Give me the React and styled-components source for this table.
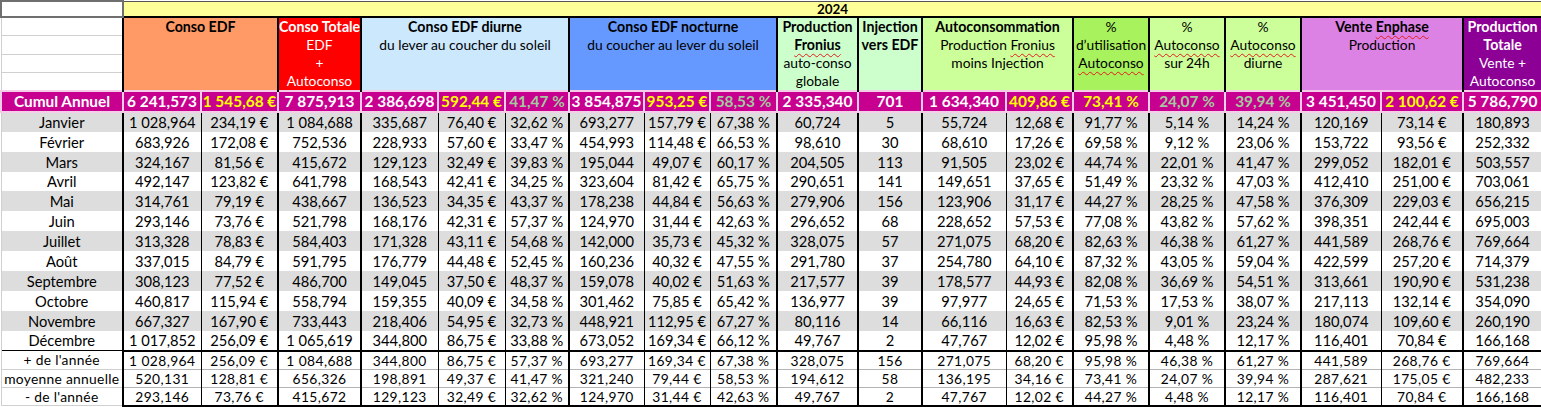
import React from 'react';
import styled, { createGlobalStyle } from 'styled-components';

const GlobalStyle = createGlobalStyle`
  body {
    margin: 0;
    background: #fff;
    font-family: Lato, 'Liberation Sans', sans-serif;
  }
`;

const Sheet = styled.table`
  border-collapse: collapse;
  table-layout: fixed;
  width: 1541px;
  color: #000;
  td {
    padding: 0;
    overflow: hidden;
    white-space: nowrap;
    text-align: center;
  }
`;

const Col = styled.col`
  width: ${props => props.$w}px;
`;

const Row = styled.tr`
  height: ${props => props.$h}px;
`;

const Corner = styled.td`
  border: 2px solid #6f6f6f;
`;

const YearCell = styled.td`
  background: #ffff99;
  border-top: 1px solid #555;
  border-bottom: 2px solid #000;
  border-right: 2px solid #000;
  font-weight: 700;
  font-size: 13.5px;
  line-height: 14px;
`;

const GridCell = styled.td`
  border-left: 1px solid #d0d0d0;
  border-bottom: 1px solid #d0d0d0;
`;

const HeadCell = styled.td`
  background: ${props => props.$bg};
  color: ${props => props.$fg || '#000'};
  border-left: 2px solid #000;
  border-right: 2px solid #000;
  vertical-align: top;
  font-size: 13.8px;
  line-height: 18.1px;
`;

const HeadLine = styled.div`
  font-weight: ${props => (props.$bold ? 700 : 400)};
  font-size: ${props => (props.$bold ? '14.2px' : '13.8px')};
  white-space: nowrap;
`;

const Wavy = styled.span`
  text-decoration: underline wavy #e21c1c;
  text-decoration-thickness: 1px;
  text-underline-offset: 3px;
`;

const tones = { white: '#ffffff', yellow: '#ffff00', sage: '#a3c99e' };

const CumulCell = styled.td`
  background: #c8008f;
  border: 2px solid #f4cde9;
  color: ${props => tones[props.$tone]};
  font-weight: 700;
  font-size: 15.4px;
  line-height: 17px;
`;

const Label = styled.td`
  background: ${props => (props.$shade ? '#dddddd' : '#ffffff')};
  border-left: 1px solid #d0d0d0;
  font-size: 14.7px;
`;

const DataCell = styled.td`
  background: ${props => (props.$shade ? '#dddddd' : '#ffffff')};
  border-left: ${props => (props.$thick ? '2px' : '1px')} solid #000;
  border-right: ${props => (props.$last ? '2px solid #000' : 'none')};
  font-size: 14.7px;
`;

const StatLabel = styled.td`
  border-left: 1px solid #d0d0d0;
  border-top: ${props => (props.$first ? '1px solid #000' : '1px solid #c8c8c8')};
  border-bottom: 1px solid #d0d0d0;
  font-size: 13.8px;
  letter-spacing: 0.3px;
`;

const StatCell = styled.td`
  border-left: ${props => (props.$thick ? '2px' : '1px')} solid #000;
  border-right: ${props => (props.$last ? '2px solid #000' : 'none')};
  border-top: ${props => (props.$first ? '2px solid #000' : '1px solid #b4b4b4')};
  border-bottom: ${props => (props.$end ? '2px solid #000' : 'none')};
  font-size: 13.8px;
  letter-spacing: 0.4px;
`;

const widths = [122, 78, 77, 83, 77, 67, 64, 75, 66, 67, 81, 64, 84, 67, 76, 76, 76, 80, 82, 79];
const thick = new Set([0, 2, 3, 6, 9, 10, 11, 13, 14, 15, 16, 18]);

const headers = [
  { span: 2, bg: '#ff9966', lines: ['*Conso EDF'] },
  { span: 1, bg: '#ff0000', fg: '#fff', lines: ['*Conso Totale', 'EDF', '+', 'Autoconso'] },
  { span: 3, bg: '#cce8fc', lines: ['*Conso EDF diurne', 'du lever au coucher du soleil'] },
  { span: 3, bg: '#6699ff', lines: ['*Conso EDF nocturne', 'du coucher au lever du soleil'] },
  { span: 1, bg: '#ccffcc', lines: ['*Production', '*~Fronius~', 'auto-conso', 'globale'] },
  { span: 1, bg: '#ccffcc', lines: ['*Injection', '*vers EDF'] },
  { span: 2, bg: '#ccff99', lines: ['*Autoconsommation', 'Production ~Fronius~', 'moins Injection'] },
  { span: 1, bg: '#a8f25e', lines: ['%', 'd’utilisation', '~Autoconso~'] },
  { span: 1, bg: '#ccff99', lines: ['%', '~Autoconso~', 'sur 24h'] },
  { span: 1, bg: '#ccff99', lines: ['%', '~Autoconso~', 'diurne'] },
  { span: 2, bg: '#dc82e4', lines: ['*Vente ~Enphase~', 'Production'] },
  { span: 1, bg: '#8c0096', fg: '#fff', lines: ['*Production', '*Totale', 'Vente +', '~Autoconso~'] },
];

const cumul = [
  '6 241,573', '1 545,68 €', '7 875,913', '2 386,698', '592,44 €', '41,47 %', '3 854,875',
  '953,25 €', '58,53 %', '2 335,340', '701', '1 634,340', '409,86 €', '73,41 %', '24,07 %',
  '39,94 %', '3 451,450', '2 100,62 €', '5 786,790',
];
const cumulTone = { 1: 'yellow', 4: 'yellow', 7: 'yellow', 12: 'yellow', 13: 'yellow', 17: 'yellow', 5: 'sage', 8: 'sage', 14: 'sage', 15: 'sage' };

const months = [
  ['Janvier', '1 028,964|234,19 €|1 084,688|335,687|76,40 €|32,62 %|693,277|157,79 €|67,38 %|60,724|5|55,724|12,68 €|91,77 %|5,14 %|14,24 %|120,169|73,14 €|180,893'],
  ['Février', '683,926|172,08 €|752,536|228,933|57,60 €|33,47 %|454,993|114,48 €|66,53 %|98,610|30|68,610|17,26 €|69,58 %|9,12 %|23,06 %|153,722|93,56 €|252,332'],
  ['Mars', '324,167|81,56 €|415,672|129,123|32,49 €|39,83 %|195,044|49,07 €|60,17 %|204,505|113|91,505|23,02 €|44,74 %|22,01 %|41,47 %|299,052|182,01 €|503,557'],
  ['Avril', '492,147|123,82 €|641,798|168,543|42,41 €|34,25 %|323,604|81,42 €|65,75 %|290,651|141|149,651|37,65 €|51,49 %|23,32 %|47,03 %|412,410|251,00 €|703,061'],
  ['Mai', '314,761|79,19 €|438,667|136,523|34,35 €|43,37 %|178,238|44,84 €|56,63 %|279,906|156|123,906|31,17 €|44,27 %|28,25 %|47,58 %|376,309|229,03 €|656,215'],
  ['Juin', '293,146|73,76 €|521,798|168,176|42,31 €|57,37 %|124,970|31,44 €|42,63 %|296,652|68|228,652|57,53 €|77,08 %|43,82 %|57,62 %|398,351|242,44 €|695,003'],
  ['Juillet', '313,328|78,83 €|584,403|171,328|43,11 €|54,68 %|142,000|35,73 €|45,32 %|328,075|57|271,075|68,20 €|82,63 %|46,38 %|61,27 %|441,589|268,76 €|769,664'],
  ['Août', '337,015|84,79 €|591,795|176,779|44,48 €|52,45 %|160,236|40,32 €|47,55 %|291,780|37|254,780|64,10 €|87,32 %|43,05 %|59,04 %|422,599|257,20 €|714,379'],
  ['Septembre', '308,123|77,52 €|486,700|149,045|37,50 €|48,37 %|159,078|40,02 €|51,63 %|217,577|39|178,577|44,93 €|82,08 %|36,69 %|54,51 %|313,661|190,90 €|531,238'],
  ['Octobre', '460,817|115,94 €|558,794|159,355|40,09 €|34,58 %|301,462|75,85 €|65,42 %|136,977|39|97,977|24,65 €|71,53 %|17,53 %|38,07 %|217,113|132,14 €|354,090'],
  ['Novembre', '667,327|167,90 €|733,443|218,406|54,95 €|32,73 %|448,921|112,95 €|67,27 %|80,116|14|66,116|16,63 €|82,53 %|9,01 %|23,24 %|180,074|109,60 €|260,190'],
  ['Décembre', '1 017,852|256,09 €|1 065,619|344,800|86,75 €|33,88 %|673,052|169,34 €|66,12 %|49,767|2|47,767|12,02 €|95,98 %|4,48 %|12,17 %|116,401|70,84 €|166,168'],
];

const stats = [
  ["+ de l'année", '1 028,964|256,09 €|1 084,688|344,800|86,75 €|57,37 %|693,277|169,34 €|67,38 %|328,075|156|271,075|68,20 €|95,98 %|46,38 %|61,27 %|441,589|268,76 €|769,664'],
  ['moyenne annuelle', '520,131|128,81 €|656,326|198,891|49,37 €|41,47 %|321,240|79,44 €|58,53 %|194,612|58|136,195|34,16 €|73,41 %|24,07 %|39,94 %|287,621|175,05 €|482,233'],
  ["- de l'année", '293,146|73,76 €|415,672|129,123|32,49 €|32,62 %|124,970|31,44 €|42,63 %|49,767|2|47,767|12,02 €|44,27 %|4,48 %|12,17 %|116,401|70,84 €|166,168'],
];

const nb = s => s.replace(/ /g, '\u00a0');

const HeadText = ({ line }) => {
  const bold = line.startsWith('*');
  const parts = (bold ? line.slice(1) : line).split('~');
  return (
    <HeadLine $bold={bold}>
      {parts.map((p, i) => (i % 2 ? <Wavy key={i}>{p}</Wavy> : <React.Fragment key={i}>{p}</React.Fragment>))}
    </HeadLine>
  );
};

const App = () => {
  return (
    <>
      <GlobalStyle />
      <Sheet>
        <colgroup>
          {widths.map((w, i) => (
            <Col key={i} $w={w} />
          ))}
        </colgroup>
        <tbody>
          <Row $h={16}>
            <Corner />
            <YearCell colSpan={19}>2024</YearCell>
          </Row>
          <Row $h={17.6}>
            <GridCell />
            {headers.map((h, i) => (
              <HeadCell key={i} colSpan={h.span} rowSpan={4} $bg={h.bg} $fg={h.fg}>
                {h.lines.map((l, j) => (
                  <HeadText key={j} line={l} />
                ))}
              </HeadCell>
            ))}
          </Row>
          <Row $h={17.6}>
            <GridCell />
          </Row>
          <Row $h={17.6}>
            <GridCell />
          </Row>
          <Row $h={17.6}>
            <GridCell />
          </Row>
          <Row $h={20.5}>
            <CumulCell $tone="white">Cumul Annuel</CumulCell>
            {cumul.map((v, i) => (
              <CumulCell key={i} $tone={cumulTone[i] || 'white'}>
                {nb(v)}
              </CumulCell>
            ))}
          </Row>
          {months.map(([name, vals], r) => (
            <Row key={name} $h={19.9}>
              <Label $shade={r % 2 === 0}>{name}</Label>
              {vals.split('|').map((v, i, all) => (
                <DataCell key={i} $shade={r % 2 === 0} $thick={thick.has(i)} $last={i === all.length - 1}>
                  {nb(v)}
                </DataCell>
              ))}
            </Row>
          ))}
          {stats.map(([name, vals], r) => (
            <Row key={name} $h={17.8}>
              <StatLabel $first={r === 0}>{name}</StatLabel>
              {vals.split('|').map((v, i, all) => (
                <StatCell
                  key={i}
                  $first={r === 0}
                  $end={r === stats.length - 1}
                  $thick={thick.has(i)}
                  $last={i === all.length - 1}
                >
                  {nb(v)}
                </StatCell>
              ))}
            </Row>
          ))}
        </tbody>
      </Sheet>
    </>
  );
};

export default App;
